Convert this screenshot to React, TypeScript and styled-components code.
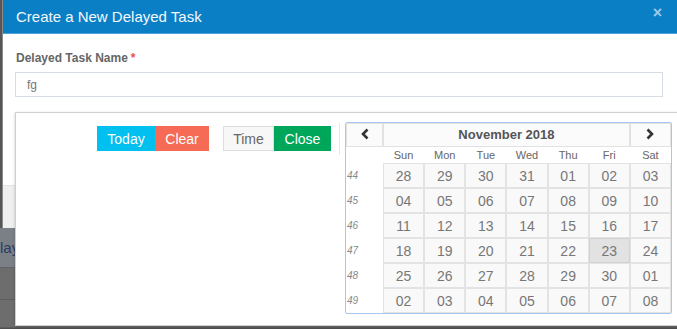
import styled, { createGlobalStyle } from 'styled-components'

const GlobalStyle = createGlobalStyle`
  html, body {
    margin: 0;
    padding: 0;
  }
  body {
    width: 677px;
    height: 329px;
    overflow: hidden;
    font-family: 'Liberation Sans', Arial, sans-serif;
    background: #4f4f4f;
  }
  * {
    box-sizing: border-box;
  }
`

const Screen = styled.div`
  position: relative;
  width: 677px;
  height: 329px;
  overflow: hidden;
`

const PageBehind = styled.div`
  display: flex;
  flex-direction: column;
  height: 100%;
`

const BehindTop = styled.div`
  height: 228px;
  background: #565656;
`

const BehindTab = styled.div`
  height: 40px;
  background: #7b8087;
  border-bottom: 1px solid #5f6368;
  display: flex;
  align-items: center;
  color: #2c3a66;
  font-size: 15px;
`

const BehindRow = styled.div<{ $h: number }>`
  height: ${(p) => p.$h}px;
  background: #6d6d6d;
  border-bottom: 1px solid #5d5d5d;
`

const Modal = styled.div`
  position: absolute;
  left: 2px;
  top: 0;
  width: 675px;
  height: 228px;
  background: #fff;
  border-left: 1px solid #8a8a8a;
  display: flex;
  flex-direction: column;
`

const Header = styled.div`
  height: 34px;
  background: #0a7fc5;
  border-bottom: 1px solid #4a9fd6;
  display: flex;
  align-items: center;
  justify-content: space-between;
  padding: 0 15px 1px 13px;
  color: #fff;
`

const Title = styled.h4`
  margin: 0;
  font-size: 15px;
  font-weight: normal;
  color: #f2f8fc;
`

const CloseX = styled.span`
  font-size: 16px;
  font-weight: bold;
  color: #9fcbe8;
  line-height: 1;
  margin-top: -6px;
`

const Body = styled.div`
  flex: 1;
  padding: 17px 12px 0 12px;
`

const Label = styled.label`
  display: block;
  font-size: 12px;
  font-weight: bold;
  color: #666;
  line-height: 14px;
  margin-bottom: 7px;
  padding-left: 1px;
`

const Required = styled.span`
  color: #e7505a;
  margin-left: 3px;
`

const TextInput = styled.div`
  height: 25px;
  border: 1px solid #d6dde5;
  width: 648px;
  font-size: 12px;
  color: #777;
  padding: 5px 11px;
`

const Footer = styled.div`
  height: 43px;
  background: #efefef;
  border-top: 1px solid #e3e3e3;
`

const Popover = styled.div`
  position: absolute;
  left: 12px;
  top: 112px;
  width: 690px;
  height: 214px;
  background: #fff;
  border: 1px solid #cfcfcf;
  box-shadow: 0 1px 3px rgba(0, 0, 0, 0.2);
  display: flex;
  align-items: flex-start;
  padding: 9px 0 0 0;
`

const ButtonPanel = styled.div`
  width: 315px;
  display: flex;
  justify-content: flex-end;
  gap: 14px;
  padding-top: 4px;
`

const BtnGroup = styled.div`
  display: flex;
`

const Btn = styled.button<{ $bg: string; $color?: string; $border?: string; $w: number }>`
  height: 25px;
  width: ${(p) => p.$w}px;
  background: ${(p) => p.$bg};
  color: ${(p) => p.$color || '#fff'};
  border: 1px solid ${(p) => p.$border || p.$bg};
  font-family: 'Liberation Sans', Arial, sans-serif;
  font-size: 14px;
  padding: 0;
  cursor: pointer;
`

const Divider = styled.div`
  width: 1px;
  height: 32px;
  background: #e6e6e6;
  margin: 1px 5px 0 8px;
`

const Calendar = styled.div`
  width: 327px;
  border: 1px solid #a8c6f2;
  border-radius: 2px;
  display: grid;
  grid-template-columns: 37px repeat(7, 1fr);
  grid-template-rows: 24px 16px repeat(6, 25px);
`

const NavCell = styled.div`
  border: 1px solid #e2e2e2;
  background: #fbfbfb;
  display: flex;
  align-items: center;
  justify-content: center;
  padding-bottom: 2px;
  color: #333;
`

const MonthTitle = styled(NavCell)`
  grid-column: span 6;
  font-size: 13px;
  font-weight: bold;
  color: #555;
`

const Dow = styled.div`
  font-size: 11px;
  color: #666;
  display: flex;
  align-items: center;
  justify-content: center;
`

const WeekNum = styled.div`
  font-size: 10px;
  font-style: italic;
  color: #888;
  display: flex;
  align-items: center;
  padding-left: 1px;
`

const Day = styled.div<{ $active?: boolean }>`
  border: 1px solid ${(p) => (p.$active ? '#d2d2d2' : '#e3e3e3')};
  background: ${(p) => (p.$active ? '#e2e2e2' : '#f9f9f9')};
  font-size: 14px;
  color: #777;
  display: flex;
  align-items: center;
  justify-content: center;
`

const Chevron = ({ dir }: { dir: 'left' | 'right' }) => (
  <svg width="10" height="12" viewBox="0 0 10 12">
    <path
      d={dir === 'left' ? 'M7.5 1.5 L3 6 L7.5 10.5' : 'M2.5 1.5 L7 6 L2.5 10.5'}
      fill="none"
      stroke="#333"
      strokeWidth="2.6"
      strokeLinejoin="miter"
    />
  </svg>
)

const dayNames = ['Sun', 'Mon', 'Tue', 'Wed', 'Thu', 'Fri', 'Sat']

const weeks: { num: number; days: string[] }[] = [
  { num: 44, days: ['28', '29', '30', '31', '01', '02', '03'] },
  { num: 45, days: ['04', '05', '06', '07', '08', '09', '10'] },
  { num: 46, days: ['11', '12', '13', '14', '15', '16', '17'] },
  { num: 47, days: ['18', '19', '20', '21', '22', '23', '24'] },
  { num: 48, days: ['25', '26', '27', '28', '29', '30', '01'] },
  { num: 49, days: ['02', '03', '04', '05', '06', '07', '08'] },
]

export default function App() {
  return (
    <Screen>
      <GlobalStyle />
      <PageBehind>
        <BehindTop />
        <BehindTab>lay</BehindTab>
        <BehindRow $h={32} />
        <BehindRow $h={28} />
      </PageBehind>
      <Modal>
        <Header>
          <Title>Create a New Delayed Task</Title>
          <CloseX>×</CloseX>
        </Header>
        <Body>
          <Label>
            Delayed Task Name<Required>*</Required>
          </Label>
          <TextInput>fg</TextInput>
        </Body>
        <Footer />
        <Popover>
          <ButtonPanel>
            <BtnGroup>
              <Btn $bg="#00c0ef" $w={58}>Today</Btn>
              <Btn $bg="#f56b55" $w={54}>Clear</Btn>
            </BtnGroup>
            <BtnGroup>
              <Btn $bg="#f7f7f7" $color="#666" $border="#dedede" $w={51}>Time</Btn>
              <Btn $bg="#00a65a" $w={57}>Close</Btn>
            </BtnGroup>
          </ButtonPanel>
          <Divider />
          <Calendar>
            <NavCell>
              <Chevron dir="left" />
            </NavCell>
            <MonthTitle>November 2018</MonthTitle>
            <NavCell>
              <Chevron dir="right" />
            </NavCell>
            <Dow />
            {dayNames.map((d) => (
              <Dow key={d}>{d}</Dow>
            ))}
            {weeks.map((w) => [
              <WeekNum key={`w${w.num}`}>{w.num}</WeekNum>,
              ...w.days.map((d, i) => (
                <Day key={`${w.num}-${i}`} $active={w.num === 47 && d === '23'}>
                  {d}
                </Day>
              )),
            ])}
          </Calendar>
        </Popover>
      </Modal>
    </Screen>
  )
}
